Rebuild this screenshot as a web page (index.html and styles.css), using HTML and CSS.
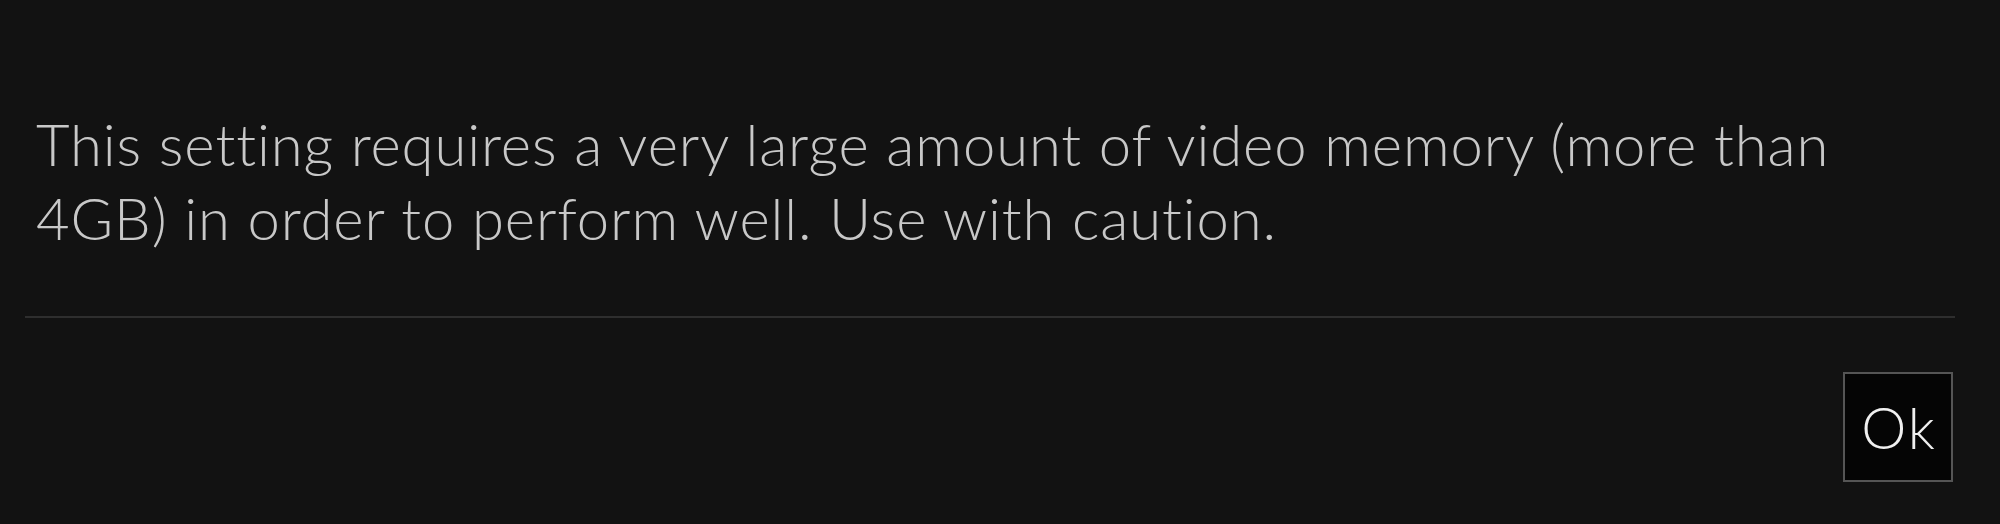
FILE: index.html
```html
<!DOCTYPE html>
<html>
<head>
<meta charset="utf-8">
<link rel="stylesheet" href="styles.css">
</head>
<body>
<div class="dialog">
  <p class="message">This setting requires a very large amount of video memory (more than 4GB) in order to perform well. Use with caution.</p>
  <div class="divider"></div>
  <div class="actions">
    <button class="ok-btn">Ok</button>
  </div>
</div>
</body>
</html>
```

FILE: styles.css
```css
html, body {
  margin: 0;
  padding: 0;
  background: #121212;
  height: 100%;
}
.dialog {
  padding: 107px 45px 0 25px;
  font-family: "Lato", "Liberation Sans", sans-serif;
  font-variant-ligatures: none;
}
.message {
  margin: 0;
  padding: 0 11px;
  font-size: 58px;
  font-weight: 300;
  line-height: 74px;
  letter-spacing: 0.9px;
  color: #c8c8c8;
  max-width: 1830px;
}
.divider {
  margin-top: 61px;
  height: 2px;
  background: #2e2e2e;
}
.actions {
  display: flex;
  justify-content: flex-end;
  padding-top: 54px;
  padding-right: 2px;
}
.ok-btn {
  width: 110px;
  height: 110px;
  background: #050505;
  border: 2px solid #555;
  color: #f0f0f0;
  font-family: "Lato", "Liberation Sans", sans-serif;
  font-weight: 300;
  font-size: 57px;
  letter-spacing: 2px;
  padding: 0 0 0 2px;
  cursor: pointer;
}
```
